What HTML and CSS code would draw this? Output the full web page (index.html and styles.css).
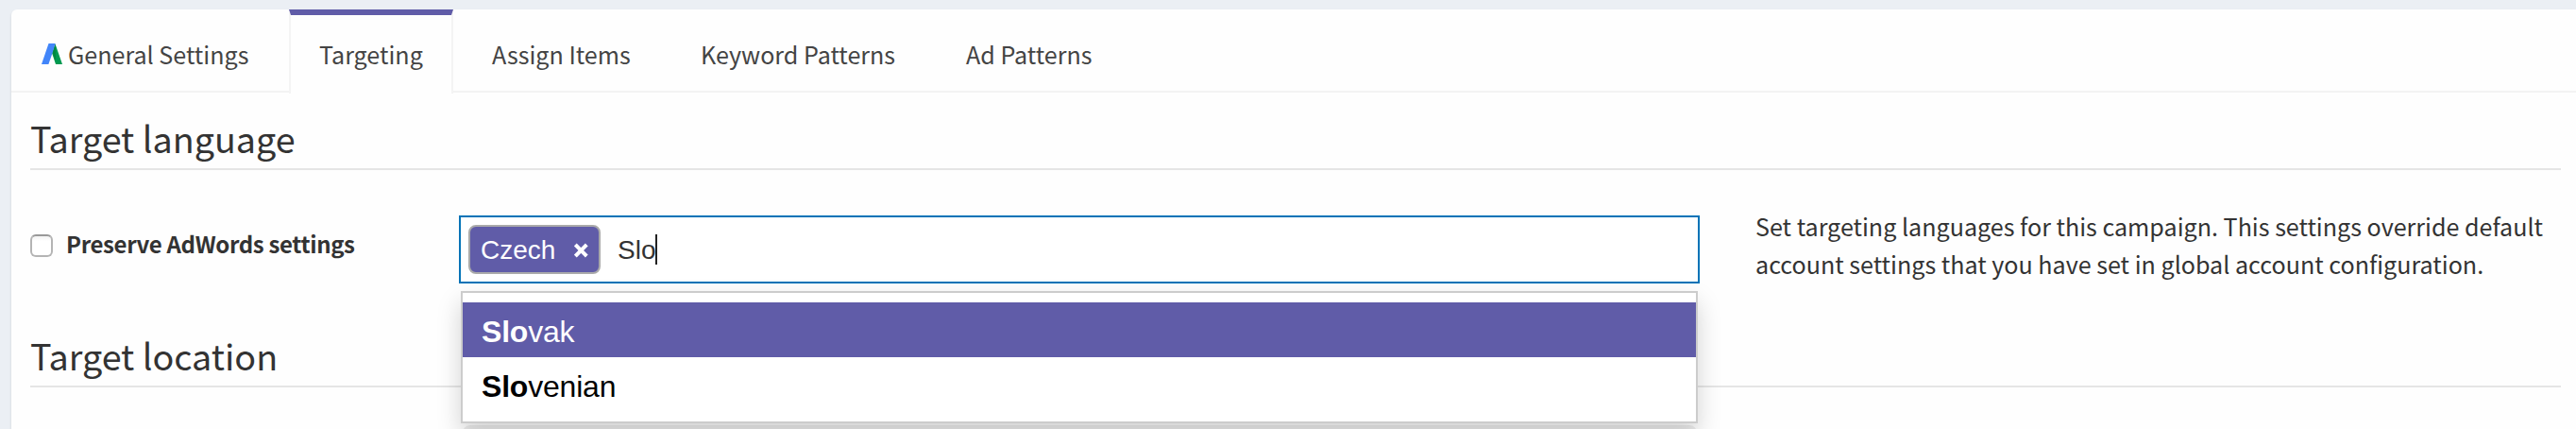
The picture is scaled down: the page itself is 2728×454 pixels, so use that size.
FILE: index.html
```
<!DOCTYPE html>
<html lang="en">
<head>
<meta charset="utf-8">
<title>Campaign targeting</title>
<link rel="stylesheet" href="styles.css">
</head>
<body>
<main class="panel">
  <nav class="tabs">
    <a class="tab tab-first"><svg class="logo" width="22" height="22" viewBox="0 0 22 22"><path fill="#009950" d="M14.5 0.5 22 22h-7L11 10z"/><path fill="#4285f9" d="M7.5 0h7.2L12.4 7.5 7.4 22H0z"/><path fill="#00873f" d="M14.7 0.5 11.8 10 15 19z"/></svg><span>General Settings</span></a>
    <a class="tab tab-active">Targeting</a>
    <a class="tab tab-items">Assign Items</a>
    <a class="tab tab-keywords">Keyword Patterns</a>
    <a class="tab">Ad Patterns</a>
  </nav>
  <section class="section">
    <h2 class="heading">Target language</h2>
    <div class="row">
      <label class="preserve"><span class="checkbox"></span><b class="preserve-text">Preserve AdWords settings</b></label>
      <div class="select">
        <div class="field">
          <span class="chip">Czech<svg class="remove" width="16" height="16" viewBox="0 0 16 16"><path d="M3 3 13 13M13 3 3 13" stroke="#fff" stroke-width="4.4" stroke-linecap="square"/></svg></span>
          <span class="query">Slo</span><span class="caret"></span>
        </div>
        <div class="menu">
          <div class="option option-active"><b>Slo</b>vak</div>
          <div class="option"><b>Slo</b>venian</div>
        </div>
      </div>
      <p class="help">Set targeting languages for this campaign. This settings override default<br>account settings that you have set in global account configuration.</p>
    </div>
  </section>
  <section class="section section-location">
    <h2 class="heading">Target location</h2>
    <div class="location-field"></div>
  </section>
</main>
</body>
</html>
```
FILE: styles.css
```
* { box-sizing: border-box; }
body {
  margin: 0;
  height: 454px;
  overflow: hidden;
  padding: 10px 0 0 12px;
  background: #ebeff4;
  color: #333;
  font: 25.1px/40px "Noto Sans CJK SC", sans-serif;
}
.panel {
  height: 444px;
  overflow: hidden;
  background: #fefefe;
  border-top-left-radius: 6px;
  box-shadow: 0 2px 3px rgba(0, 0, 0, .12);
}
.tabs {
  display: flex;
  height: 88px;
  border-bottom: 2px solid #f3f3f3;
  color: #444;
}
.tab {
  height: 89px;
  padding: 27px 0 0 41px;
  white-space: nowrap;
}
.tab-first { display: flex; width: 294px; padding-left: 32px; gap: 6px; }
.logo { margin-top: 9px; }
.tab-active {
  width: 174px;
  padding: 21px 0 0 30px;
  border: 2px solid #f4f4f4;
  border-top: 6px solid #605ca8;
  border-bottom: 0;
  background: #fefefe;
}
.tab-items { width: 221px; }
.tab-keywords { width: 281px; }
.section { padding: 0 16px 0 20px; }
.heading {
  height: 82px;
  margin: 0;
  padding-top: 18px;
  border-bottom: 2px solid #e5e5e5;
  font-size: 37.7px;
  font-weight: 400;
  line-height: 60px;
}
.row { display: flex; height: 148px; padding-top: 48px; }
.preserve { display: flex; width: 454px; gap: 14px; padding-top: 10px; }
.preserve-text { font-size: 24px; letter-spacing: -.36px; }
.checkbox {
  width: 24px;
  height: 24px;
  margin-top: 10px;
  border: 2px solid #b4b4b4;
  border-top-color: #999;
  border-radius: 6px;
  background: linear-gradient(#f2f2f2, #fff 5px);
}
.select { position: relative; width: 1314px; font-family: "Liberation Sans", sans-serif; }
.field {
  display: flex;
  height: 72px;
  padding: 8px;
  border: 2px solid #0073b7;
  background: #fff;
  font-size: 28px;
  line-height: 32px;
}
.chip {
  display: flex;
  width: 140px;
  height: 52px;
  padding: 9px 11px;
  border: 2px solid #aaa;
  border-radius: 8px;
  background: #605ca8;
  color: #fff;
}
.remove { margin: 8px 0 0 20px; }
.query { padding: 11px 0 0 18px; }
.caret { width: 2px; height: 32px; margin-top: 10px; background: #222; }
.menu {
  position: absolute;
  top: 80px;
  left: 2px;
  width: 1310px;
  height: 140px;
  padding: 10px 0;
  border: 2px solid #ccc;
  background: #fff;
  box-shadow: 0 12px 24px rgba(0, 0, 0, .175);
  color: #000;
  font-size: 32px;
  letter-spacing: -.2px;
  line-height: 62px;
}
.option { height: 58px; padding-left: 20px; }
.option-active { background: #605ca8; color: #fff; }
.help { margin: -9px 0 0; padding: 0 0 0 59px; white-space: nowrap; }
.location-field {
  height: 60px;
  margin: 40px 915px 0 458px;
  border-radius: 8px;
  background: #eee;
}
```
